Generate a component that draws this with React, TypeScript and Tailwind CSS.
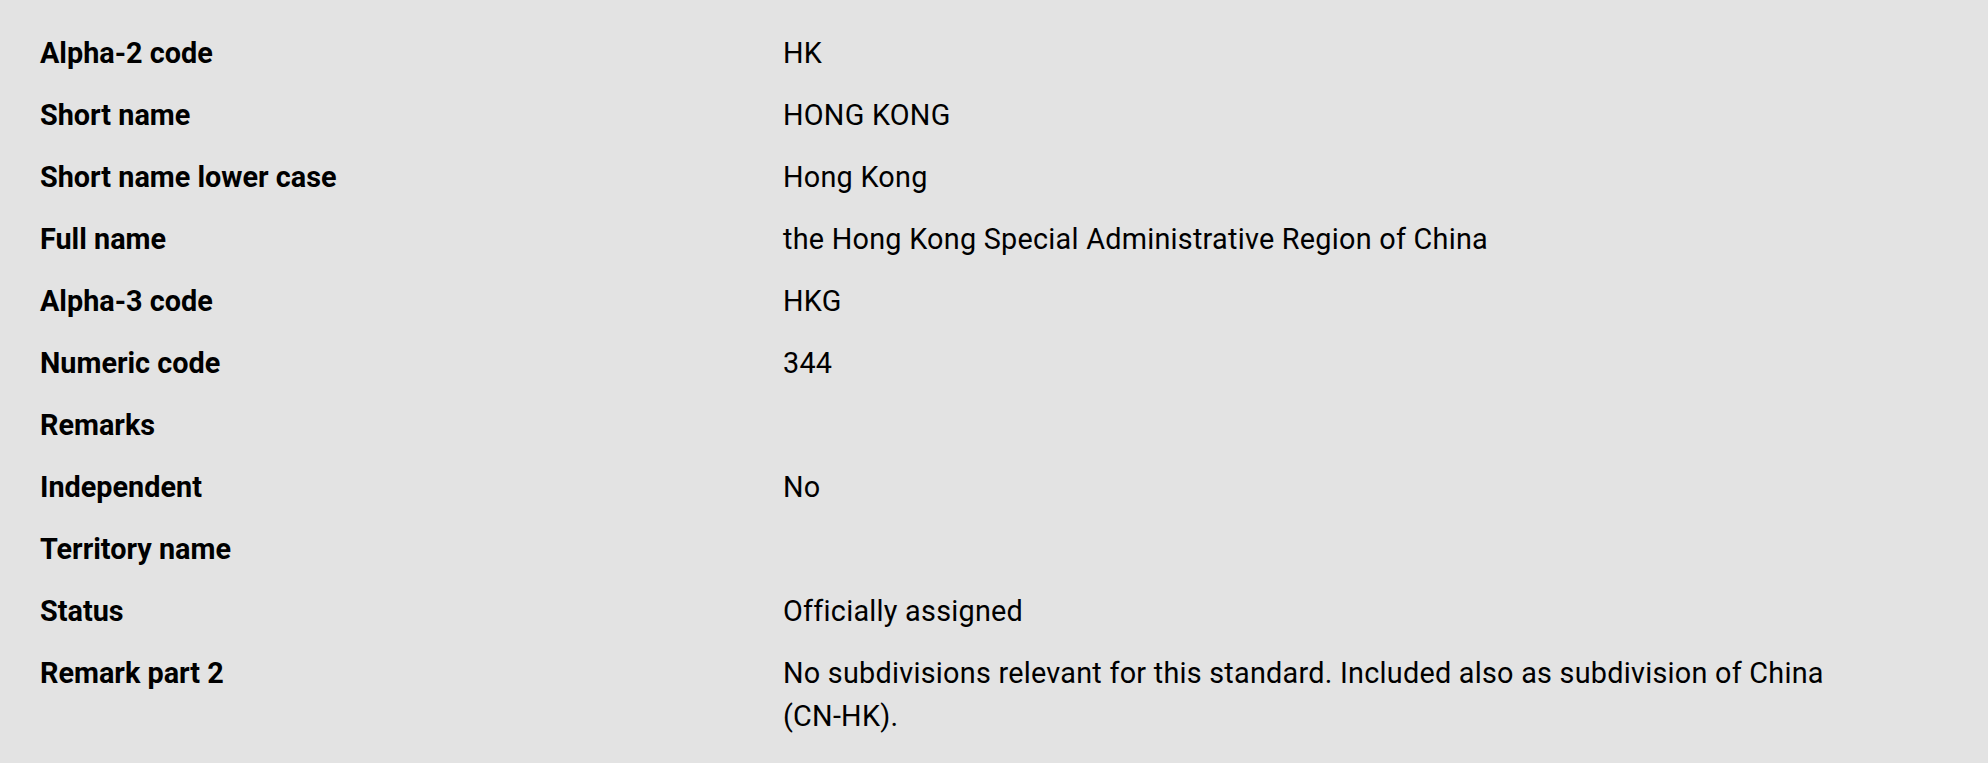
const rows = [
  { label: 'Alpha-2 code', value: 'HK' },
  { label: 'Short name', value: 'HONG KONG' },
  { label: 'Short name lower case', value: 'Hong Kong' },
  { label: 'Full name', value: 'the Hong Kong Special Administrative Region of China' },
  { label: 'Alpha-3 code', value: 'HKG' },
  { label: 'Numeric code', value: '344' },
  { label: 'Remarks', value: '' },
  { label: 'Independent', value: 'No' },
  { label: 'Territory name', value: '' },
  { label: 'Status', value: 'Officially assigned' },
  { label: 'Remark part 2', value: 'No subdivisions relevant for this standard. Included also as subdivision of China (CN-HK).' },
]

export default function App() {
  return (
    <div className="min-h-screen bg-[#e3e3e3] text-black font-['Roboto',sans-serif]">
      <dl className="px-[40px] pt-[32px] pb-[26px] flex flex-col gap-[19px] text-[28.8px] leading-[43px]">
        {rows.map(r => (
          <div key={r.label} className="grid grid-cols-[743px_1fr]">
            <dt className="font-bold">{r.label}</dt>
            <dd className="max-w-[1100px] tracking-[0.25px]">{r.value}</dd>
          </div>
        ))}
      </dl>
    </div>
  )
}
